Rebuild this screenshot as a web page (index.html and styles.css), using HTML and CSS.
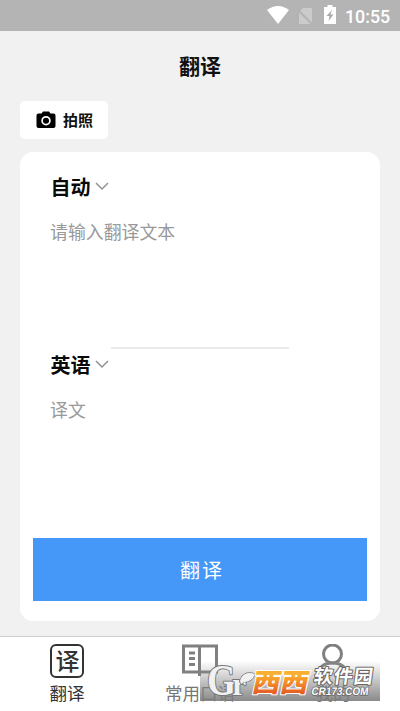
FILE: index.html
```html
<!DOCTYPE html>
<html lang="zh-CN">
<head>
<meta charset="utf-8">
<title>翻译</title>
<link rel="stylesheet" href="styles.css">
</head>
<body>
<div class="app">
  <div class="status">
    <svg class="wifi" width="24" height="20" viewBox="0 0 24 20"><path d="M1 5Q12-3 23 5L12 19Z"/></svg>
    <svg class="sim" width="16" height="18" viewBox="0 0 16 18"><path d="M6 1H15V17H2V5Z"/><path class="slash" d="M0 2L15 17"/></svg>
    <svg class="battery" width="12" height="19" viewBox="0 0 12 19"><path d="M0 2H3.500V0H8.500V2H12V19H0Z"/><path class="bolt" d="M8 5L2.500 11H5.500L4.500 16L9.500 9.500H6.500Z"/></svg>
    <span class="time">10:55</span>
  </div>
  <h1 class="title">翻译</h1>
  <button class="photo">
    <svg width="20" height="18" viewBox="0 0 20 18"><path d="M5.500 2.500L7 .5H13L14.500 2.500H17.500Q19.500 2.500 19.500 4.500V15Q19.500 17 17.500 17H2.500Q.5 17 .5 15V4.500Q.5 2.500 2.500 2.500Z"/><circle cx="10" cy="9.700" r="3.900" fill="none" stroke="#fff" stroke-width="1.700"/></svg>
    <span>拍照</span>
  </button>
  <main class="card">
    <section class="pane">
      <div class="lang"><span>自动</span><svg class="chev" width="14" height="9" viewBox="0 0 14 9"><path d="M1 1L7 7L13 1"/></svg></div>
      <p class="hint">请输入翻译文本</p>
    </section>
    <div class="rule"></div>
    <section class="pane second">
      <div class="lang"><span>英语</span><svg class="chev" width="14" height="9" viewBox="0 0 14 9"><path d="M1 1L7 7L13 1"/></svg></div>
      <p class="hint">译文</p>
    </section>
    <button class="go">翻译</button>
  </main>
  <nav class="tabs">
    <div class="tab active"><div class="icon"><span class="box">译</span></div><span class="label">翻译</span></div>
    <div class="tab"><div class="icon"><svg width="36" height="34" viewBox="0 0 36 34"><path d="M1.500 2H17.500V28H1.500ZM17.500 2H34.500V28H17.500M17.500 27V32M7 9H13M7 14.500H13M7 20.500H13"/></svg></div><span class="label">常用口语</span></div>
    <div class="tab"><div class="icon"><svg width="36" height="34" viewBox="0 0 36 34"><circle cx="17.500" cy="10" r="9"/><path d="M3 33Q3 19 17.500 19T32 33"/></svg></div><span class="label">我的</span></div>
  </nav>
  <div class="mark">
    <svg width="180" height="39" viewBox="0 0 180 39">
      <defs><linearGradient id="o" x2="0" y2="1"><stop offset=".35" stop-color="#f9b030"/><stop offset=".9" stop-color="#e4511f"/></linearGradient></defs>
      <text class="big" x="7" y="33" textLength="29" lengthAdjust="spacingAndGlyphs">G</text>
      <text class="small" x="32" y="33">r</text>
      <path class="leaf" d="M40 19Q43 8 55 12Q52 20 44 20L41 22Z"/>
      <g class="xi"><text transform="translate(51 29.500) skewX(-12)" textLength="28" lengthAdjust="spacingAndGlyphs">西</text><text transform="translate(79 29.500) skewX(-12)" textLength="28" lengthAdjust="spacingAndGlyphs">西</text></g>
      <text class="soft" transform="translate(113 21) skewX(-8)" textLength="59">软件园</text>
      <text class="site" transform="translate(111 33) skewX(-8)" textLength="57" lengthAdjust="spacingAndGlyphs">CR173.COM</text>
    </svg>
  </div>
</div>
</body>
</html>
```
FILE: styles.css
```css
* { box-sizing: border-box; }
body { margin: 0; font-family: "Noto Sans CJK SC", sans-serif; }
button { border: 0; margin: 0; padding: 0; font-family: inherit; }
svg { display: block; flex: none; }
.app { position: relative; width: 400px; height: 711px; background: #f1f1f1; display: flex; flex-direction: column; overflow: hidden; }

.status { height: 31px; flex: none; background: #b4b4b4; display: flex; align-items: flex-start; padding-left: 266px; }
.status svg { fill: #fff; }
.wifi { margin-top: 5px; }
.status .sim { margin: 7px 0 0 7px; fill: #cbcbcb; }
.sim .slash { stroke: #b4b4b4; stroke-width: 2; }
.battery { margin: 5px 0 0 11px; }
.battery .bolt { fill: #aaa; }
.time { margin: 6px 0 0 9px; font: 500 17.8px/21px Roboto, sans-serif; color: #fff; }

.title { margin: 19px 0 0; height: 31px; flex: none; text-align: center; font-size: 21px; line-height: 30px; font-weight: 700; color: #111; }

.photo { width: 88px; height: 38px; flex: none; margin: 20px 0 0 20px; background: #fff; border-radius: 5px; display: flex; align-items: center; gap: 7px; padding: 0 0 1px 16px; font-size: 15px; line-height: 20px; font-weight: 700; color: #111; }

.card { width: 360px; height: 469px; flex: none; margin: 13px 0 0 20px; background: #fff; border-radius: 13px; display: flex; flex-direction: column; }
.pane { height: 195px; padding: 19px 30px 0; }
.second { height: 189px; padding-top: 0; }
.lang { display: flex; align-items: center; gap: 4px; height: 31px; font-size: 20px; line-height: 30px; font-weight: 700; color: #0a0a0a; padding-left: .5px; }
.chev path { fill: none; stroke: #929292; stroke-width: 1.5; }
.hint { margin: 16px 0 0; font-size: 17.9px; line-height: 26px; color: #999; }
.rule { width: 178px; height: 2px; margin: 0 auto; background: #eaeaea; }
.go { width: 334px; height: 63px; margin-left: 13px; background: #4698f8; color: #fff; font-size: 20px; letter-spacing: 2px; padding-left: 4px; }

.tabs { margin-top: 15px; flex: 1; background: #fff; border-top: 1px solid #cecece; display: grid; grid-template-columns: 134px 132px 134px; }
.tab { display: flex; flex-direction: column; align-items: center; padding-top: 7px; color: #777; }
.icon { height: 34px; }
.icon svg { fill: none; stroke: #808080; stroke-width: 3; }
.box { display: block; width: 34px; height: 34px; border: 2.5px solid #333; border-radius: 6px; font-size: 24px; font-weight: 500; line-height: 27px; text-align: center; text-indent: 1px; }
.active { color: #333; }
.label { margin-top: 2px; font-size: 17.5px; line-height: 26px; white-space: nowrap; }

.mark { position: absolute; left: 200px; top: 662px; width: 180px; height: 39px; background: linear-gradient(rgba(200, 200, 200, .05), rgba(125, 125, 125, .9)); }
.mark text, .leaf { paint-order: stroke; stroke-linejoin: round; }
.big, .small, .leaf { fill: #f1f1f1; stroke: #777; stroke-width: 2px; font-family: "Liberation Serif", serif; font-weight: 700; }
.big { font-size: 44px; }
.small { font-size: 32px; }
.leaf { stroke-width: 1.2px; }
.xi { fill: url(#o); stroke: #fff; stroke-width: 2px; font-size: 26px; font-weight: 900; }
.soft { fill: #fff; stroke: #666; stroke-width: 2px; font-size: 19px; font-weight: 700; }
.site { fill: #fff; stroke: #666; stroke-width: 1.5px; font: 700 11px "Liberation Sans", sans-serif; }
```
